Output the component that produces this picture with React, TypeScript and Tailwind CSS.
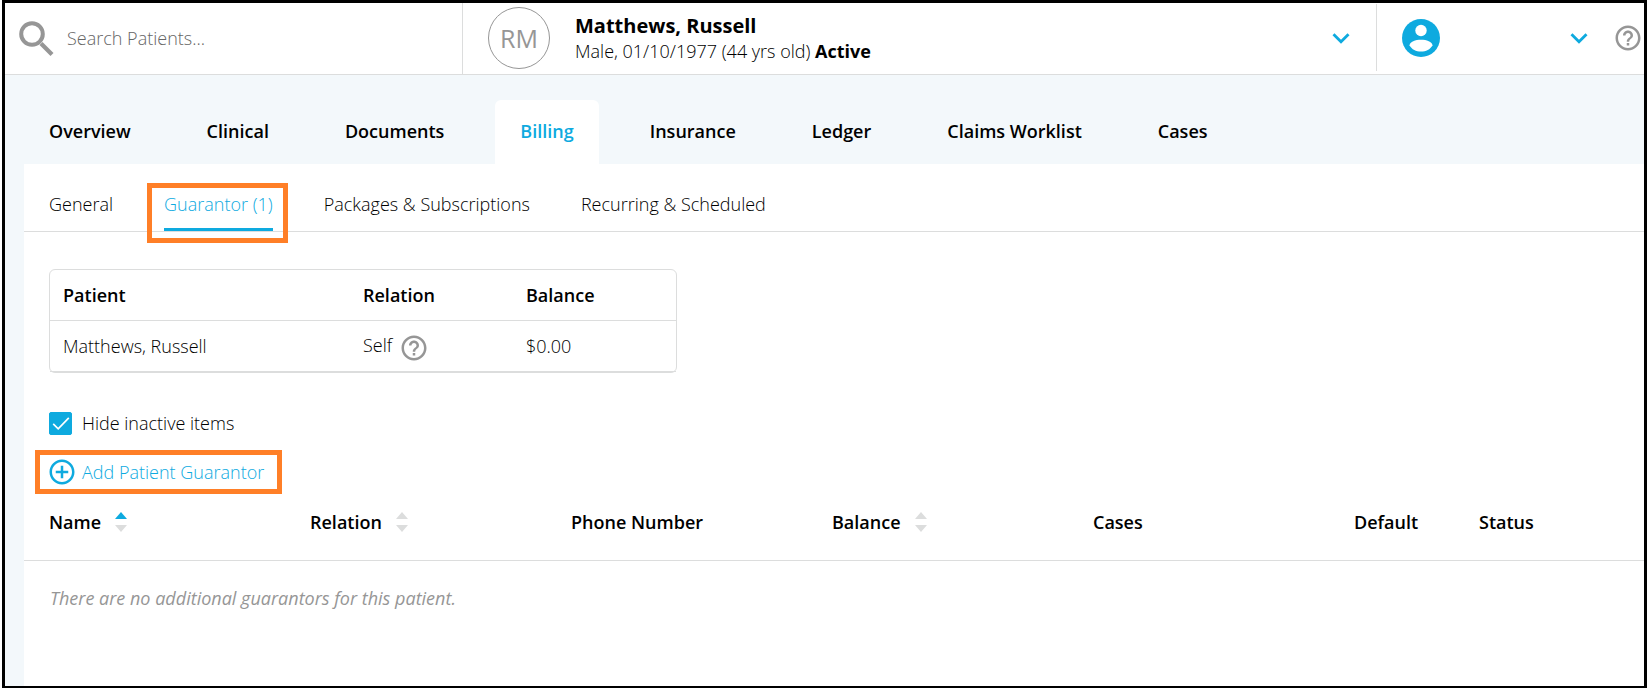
import { MdAddCircleOutline, MdExpandMore, MdHelpOutline } from "react-icons/md";

const tabs = ["Overview", "Clinical", "Documents", "Billing", "Insurance", "Ledger", "Claims Worklist", "Cases"];
const subTabs = ["General", "Guarantor (1)", "Packages & Subscriptions", "Recurring & Scheduled"];

type Column = { label: string; width: string; sort?: "asc" | "none" };

const columns: Column[] = [
  { label: "Name", width: "w-[261px]", sort: "asc" },
  { label: "Relation", width: "w-[261px]", sort: "none" },
  { label: "Phone Number", width: "w-[261px]" },
  { label: "Balance", width: "w-[261px]", sort: "none" },
  { label: "Cases", width: "w-[261px]" },
  { label: "Default", width: "w-[125px]" },
  { label: "Status", width: "" },
];

function SearchIcon() {
  return (
    <svg width="36" height="36" viewBox="0 0 36 36" fill="none" stroke="#969696" aria-hidden="true">
      <circle cx="14" cy="14" r="10.8" strokeWidth="4" />
      <path d="M23 23.5 L34 34.5" strokeWidth="4.2" />
    </svg>
  );
}

function AccountIcon() {
  return (
    <svg width="38" height="38" viewBox="0 0 38 38" aria-hidden="true">
      <circle cx="19" cy="19" r="19" fill="#0eaadf" />
      <circle cx="19" cy="11.5" r="5.7" fill="#fff" />
      <path
        d="M7.5 26.4 C7.8 22.8 13.4 20.8 19 20.8 C24.6 20.8 30.2 22.8 30.5 26.4 C28.2 30.2 24 32.6 19 32.6 C14 32.6 9.8 30.2 7.5 26.4 Z"
        fill="#fff"
      />
    </svg>
  );
}

function SortArrows({ active }: { active: boolean }) {
  return (
    <svg width="12" height="20" viewBox="0 0 12 20" aria-hidden="true">
      <path d="M6 0 L12 7 H0 Z" fill={active ? "#0eaadf" : "#dcdddd"} />
      <path d="M0 13 H12 L6 20 Z" fill="#dcdddd" />
    </svg>
  );
}

function Header() {
  return (
    <header className="flex h-[72px] border-b border-[#dcdddd] bg-white">
      <label className="flex w-[458px] shrink-0 items-center gap-[13px] border-r border-[#dcdddd] pb-[2px] pl-[13px]">
        <SearchIcon />
        <input
          type="search"
          aria-label="Search Patients"
          placeholder="Search Patients..."
          className="min-w-0 flex-1 bg-transparent pt-[2px] outline-none placeholder:text-[#666]"
        />
      </label>
      <div className="flex flex-1 items-center pr-[18px] pb-[2px] pl-[25px]">
        <div className="flex size-[62px] shrink-0 items-center justify-center rounded-full border border-[#969696] pt-[2px] text-[25px] font-normal text-[#969696]">
          RM
        </div>
        <div className="flex-1 pt-[2px] pl-[25px]">
          <h1 className="text-[20px] leading-[26px] font-bold">Matthews, Russell</h1>
          <p className="leading-[25px]">
            Male, 01/10/1977 (44 yrs old) <strong className="font-bold">Active</strong>
          </p>
        </div>
        <button type="button" aria-label="Patient details" className="text-[#0eaadf]">
          <MdExpandMore size={34} />
        </button>
      </div>
      <div className="my-px mb-[3px] w-px bg-[#dcdddd]" />
      <div className="flex w-[267px] shrink-0 items-center pb-[2px] pl-[25px]">
        <AccountIcon />
        <button type="button" aria-label="Account menu" className="ml-auto text-[#0eaadf]">
          <MdExpandMore size={34} />
        </button>
        <button type="button" aria-label="Help" className="mr-px ml-[17px] text-[#969696]">
          <MdHelpOutline size={30} />
        </button>
      </div>
    </header>
  );
}

export default function App() {
  return (
    <div className="flex min-h-screen bg-white pl-[2px] font-['Open_Sans',sans-serif] text-[18px] leading-[25px] font-light text-black">
      <div className="flex flex-1 flex-col border-[3px] border-b-2 border-black bg-[#f3f8fb]">
        <Header />
        <nav aria-label="Patient chart" className="flex gap-[26px] pt-[25px] pl-[19px]">
          {tabs.map((tab) => (
            <a
              key={tab}
              href="#"
              className={`flex h-16 items-center rounded-t-md px-[25px] pb-[2px] font-semibold ${
                tab === "Billing" ? "bg-white text-[#0eaadf]" : ""
              }`}
            >
              {tab}
            </a>
          ))}
        </nav>
        <main className="ml-[19px] flex-1 bg-white">
          <nav aria-label="Billing" className="flex h-[68px] gap-[51px] border-b border-[#dcdddd] pl-[25px]">
            {subTabs.map((tab) =>
              tab === "Guarantor (1)" ? (
                <a
                  key={tab}
                  href="#"
                  className="relative flex items-center border-b-[3px] border-[#0eaadf] pt-[17px] text-[#0eaadf]"
                >
                  {tab}
                  <span className="pointer-events-none absolute -right-[15px] -left-[17px] top-[19px] -bottom-[15px] border-[5px] border-[#ff7f27]" />
                </a>
              ) : (
                <a key={tab} href="#" className="flex items-center pt-[17px] pb-[3px]">
                  {tab}
                </a>
              ),
            )}
          </nav>

          <div className="px-[25px] pt-[37px]">
            <div className="w-[628px] max-w-full rounded-md border border-[#dcdddd]">
              <table className="w-full table-fixed text-left">
                <thead>
                  <tr className="h-[50px] border-b border-[#dcdddd]">
                    <th className="w-[300px] px-[13px] pt-[2px] font-semibold">Patient</th>
                    <th className="px-[13px] pt-[2px] font-semibold">Relation</th>
                    <th className="px-[13px] pt-[2px] font-semibold">Balance</th>
                  </tr>
                </thead>
                <tbody>
                  <tr className="h-[51px] border-b border-[#dcdddd]">
                    <td className="px-[13px] pt-[2px]">Matthews, Russell</td>
                    <td className="px-[13px]">
                      <span className="flex items-center gap-[7px]">
                        Self
                        <button type="button" aria-label="About relation" className="pt-[4px] text-[#969696]">
                          <MdHelpOutline size={30} />
                        </button>
                      </span>
                    </td>
                    <td className="px-[13px] pt-[2px]">$0.00</td>
                  </tr>
                </tbody>
              </table>
            </div>

            <label className="mt-[38px] flex w-fit items-center gap-[10px]">
              <span className="grid">
                <input
                  type="checkbox"
                  defaultChecked
                  className="peer col-start-1 row-start-1 size-[23px] appearance-none rounded-[2px] border border-[#0eaadf] checked:bg-[#0eaadf]"
                />
                <svg
                  className="pointer-events-none invisible col-start-1 row-start-1 peer-checked:visible"
                  width="23"
                  height="23"
                  viewBox="0 0 23 23"
                  fill="none"
                  stroke="#fff"
                  strokeWidth="1.7"
                  aria-hidden="true"
                >
                  <path d="M4.2 11.8 L9.2 16.8 L19.8 5.8" />
                </svg>
              </span>
              Hide inactive items
            </label>

            <button
              type="button"
              className="mt-[14px] ml-[-14px] flex h-11 items-center gap-[5px] border-[5px] border-[#ff7f27] pt-px pr-[13px] pl-[7px] text-[#0eaadf]"
            >
              <MdAddCircleOutline size={30} />
              Add Patient Guarantor
            </button>
          </div>

          <table className="w-full table-fixed text-left">
            <thead>
              <tr className="border-b border-[#dcdddd]">
                {columns.map((column) => (
                  <th key={column.label} className={`${column.width} pt-4 pb-[25px] pl-[25px] font-semibold`}>
                    {column.sort ? (
                      <button type="button" className="flex items-center gap-[14px]">
                        {column.label}
                        <SortArrows active={column.sort === "asc"} />
                      </button>
                    ) : (
                      column.label
                    )}
                  </th>
                ))}
              </tr>
            </thead>
            <tbody>
              <tr>
                <td colSpan={columns.length} className="pt-[25px] pl-[26px] font-normal text-[#969696] italic">
                  There are no additional guarantors for this patient.
                </td>
              </tr>
            </tbody>
          </table>
        </main>
      </div>
    </div>
  );
}
